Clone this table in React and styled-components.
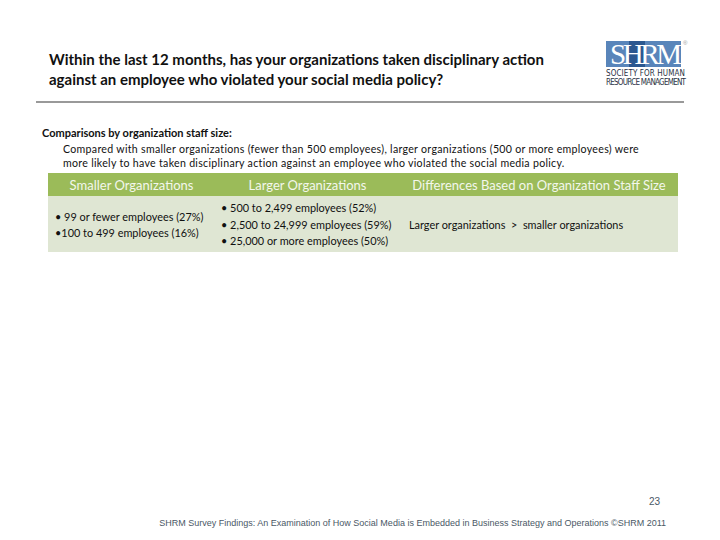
import React from "react";
import styled, { createGlobalStyle } from "styled-components";

const Global = createGlobalStyle`
  html, body { margin: 0; padding: 0; background: #ffffff; }
  body { width: 720px; height: 540px; overflow: hidden; font-family: Lato, "Open Sans", sans-serif; }
`;

const Page = styled.div`
  width: 720px;
  height: 540px;
  box-sizing: border-box;
  display: flex;
  flex-direction: column;
`;

const Header = styled.header`
  display: flex;
  justify-content: space-between;
  align-items: flex-start;
  padding: 36px 30px 0 49px;
  height: 65px;
`;

const Title = styled.h1`
  margin: 14px 0 0 0;
  font-family: Lato, sans-serif;
  font-weight: 700;
  font-size: 15px;
  line-height: 19.5px;
  color: #111;
  width: 520px;
`;

const Logo = styled.div`
  width: 84px;
  margin-top: 5px;
  display: flex;
  flex-direction: column;
  align-items: flex-start;
  position: relative;
`;

const LogoBox = styled.div`
  width: 75px;
  height: 26px;
  background: #5985ba;
  position: relative;
`;

const LogoDark = styled.div`
  position: absolute;
  left: 23px;
  top: 0;
  width: 16px;
  height: 26px;
  background: #2c5890;
`;

const LogoLetters = styled.div`
  position: relative;
  padding: 1px 0 0 4px;
  height: 25px;
  font-family: "Liberation Serif", serif;
  font-size: 29px;
  line-height: 25px;
  letter-spacing: -3.4px;
  color: #ffffff;
  white-space: nowrap;
`;

const Registered = styled.span`
  position: absolute;
  left: 77px;
  top: -1px;
  font-family: "Liberation Sans", sans-serif;
  font-size: 6px;
  line-height: 6px;
  color: #999;
`;

const LogoLine = styled.div`
  font-family: "DejaVu Sans Condensed", "Liberation Sans", sans-serif;
  font-size: 8px;
  line-height: 8.5px;
  letter-spacing: ${(p) => p.$ls}px;
  color: #2a3345;
  white-space: nowrap;
  margin-top: ${(p) => p.$mt}px;
`;

const Rule = styled.hr`
  margin: 0 36px;
  border: none;
  border-top: 2px solid #999;
  height: 0;
`;

const Section = styled.section`
  padding: 22px 0 0 42px;
`;

const SectionHead = styled.div`
  font-family: Lato, sans-serif;
  font-weight: 700;
  font-size: 11px;
  line-height: 15px;
  color: #111;
`;

const SectionText = styled.p`
  margin: 2px 0 0 21px;
  font-family: Lato, sans-serif;
  font-size: 10.6px;
  letter-spacing: 0.3px;
  line-height: 14px;
  color: #111;
  width: 590px;
`;

const Table = styled.div`
  margin: 3px 42px 0 48px;
  display: grid;
  grid-template-columns: 167px 185px 1fr;
`;

const HeadCell = styled.div`
  background: #9bbb59;
  color: #f3f7ec;
  height: 23px;
  display: flex;
  align-items: center;
  justify-content: center;
  font-family: Lato, sans-serif;
  font-size: 13px;
`;

const BodyCell = styled.div`
  background: #dfe6d3;
  height: 56px;
  display: flex;
  flex-direction: column;
  justify-content: center;
  padding-left: ${(p) => p.$pad}px;
  padding-top: 2px;
  box-sizing: border-box;
  font-family: Lato, sans-serif;
  font-size: 10.9px;
  line-height: 16.5px;
  color: #111;
`;

const Spacer = styled.div`
  flex: 1;
`;

const PageNum = styled.div`
  text-align: right;
  padding-right: 60px;
  font-family: "Liberation Sans", Arial, sans-serif;
  font-size: 10px;
  color: #4a5866;
  height: 22px;
`;

const Footer = styled.div`
  text-align: right;
  padding-right: 54px;
  font-family: "Liberation Sans", Arial, sans-serif;
  font-size: 9px;
  color: #4a5866;
  height: 22px;
`;

function ShrmLogo() {
  return (
    <Logo>
      <LogoBox>
        <LogoDark />
        <LogoLetters>SHRM</LogoLetters>
      </LogoBox>
      <Registered>®</Registered>
      <LogoLine $mt={3} $ls={0.1}>SOCIETY FOR HUMAN</LogoLine>
      <LogoLine $mt={0} $ls={-0.75}>RESOURCE MANAGEMENT</LogoLine>
    </Logo>
  );
}

export default function App() {
  return (
    <>
      <Global />
      <Page>
        <Header>
          <Title>
            Within the last 12 months, has your organizations taken disciplinary action against an employee who violated your social media policy?
          </Title>
          <ShrmLogo />
        </Header>
        <Rule />
        <Section>
          <SectionHead>Comparisons by organization staff size:</SectionHead>
          <SectionText>
            Compared with smaller organizations (fewer than 500 employees), larger organizations (500 or more employees) were more likely to have taken disciplinary action against an employee who violated the social media policy.
          </SectionText>
        </Section>
        <Table>
          <HeadCell>Smaller Organizations</HeadCell>
          <HeadCell>Larger Organizations</HeadCell>
          <HeadCell>Differences Based on Organization Staff Size</HeadCell>
          <BodyCell $pad={7}>
            <div>• 99 or fewer employees (27%)</div>
            <div>•100 to 499 employees (16%)</div>
          </BodyCell>
          <BodyCell $pad={6}>
            <div>• 500 to 2,499 employees (52%)</div>
            <div>• 2,500 to 24,999 employees (59%)</div>
            <div>• 25,000 or more employees (50%)</div>
          </BodyCell>
          <BodyCell $pad={9}>
            <div>Larger organizations &nbsp;&gt;&nbsp; smaller organizations</div>
          </BodyCell>
        </Table>
        <Spacer />
        <PageNum>23</PageNum>
        <Footer>SHRM Survey Findings: An Examination of How Social Media is Embedded in Business Strategy and Operations ©SHRM 2011</Footer>
      </Page>
    </>
  );
}
